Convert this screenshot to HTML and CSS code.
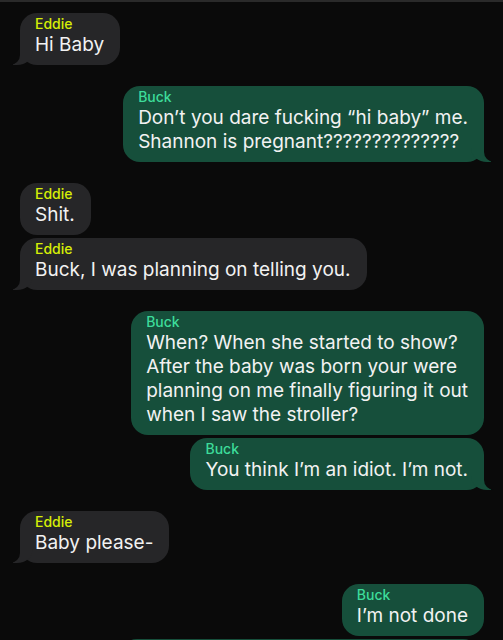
FILE: index.html
```html
<!DOCTYPE html>
<html lang="en">
<head>
  <meta charset="UTF-8">
  <title>Messages</title>
  <link rel="stylesheet" href="styles.css">
</head>
<body>

  <div class="chat">
    <div class="msg in tail">
      <div class="name">Eddie</div>
      <div class="text">Hi Baby</div>
    </div>

    <div class="msg out tail new">
      <div class="name">Buck</div>
      <div class="text">Don’t you dare fucking “hi baby” me.<br>Shannon is pregnant??????????????</div>
    </div>

    <div class="msg in new">
      <div class="name">Eddie</div>
      <div class="text">Shit.</div>
    </div>
    <div class="msg in tail">
      <div class="name">Eddie</div>
      <div class="text">Buck, I was planning on telling you.</div>
    </div>

    <div class="msg out new">
      <div class="name">Buck</div>
      <div class="text">When? When she started to show?<br>After the baby was born your were<br>planning on me finally figuring it out<br>when I saw the stroller?</div>
    </div>
    <div class="msg out tail">
      <div class="name">Buck</div>
      <div class="text">You think I’m an idiot. I’m not.</div>
    </div>

    <div class="msg in tail new">
      <div class="name">Eddie</div>
      <div class="text">Baby please-</div>
    </div>

    <div class="msg out new">
      <div class="name">Buck</div>
      <div class="text">I’m not done</div>
    </div>
    <!-- next bubble, scrolled out of view -->
    <div class="msg out peek"></div>
  </div>

</body>
</html>
```

FILE: styles.css
```css
body {
  margin: 0;
  background-color: #0a0a0a;
  font-family: 'Inter', 'Roboto', sans-serif;
  color: #f2f2f2;
  overflow: hidden;
}

.chat {
  display: flex;
  flex-direction: column;
  border-top: 2px solid #2a2a2a;
  padding: 8px 19px 20px 20px;
}

.msg {
  position: relative;
  padding: 2px 16px 8px 15px;
  border-radius: 17px;
  margin-top: 3px;
  white-space: nowrap;
}

.msg.new {
  margin-top: 21px;
}

.msg.in {
  align-self: flex-start;
  background-color: #262628;
}

.msg.out {
  align-self: flex-end;
  background-color: #164f3b;
}

.name {
  font-size: 14px;
  line-height: 18px;
  font-weight: 500;
}

.in .name {
  color: #d6ee06;
}

.out .name {
  color: #3ddc9a;
}

.text {
  font-size: 19px;
  line-height: 24px;
}

.peek {
  width: 360px;
  height: 40px;
  margin-right: 4px;
  padding: 0;
}

/* bubble tails */
.msg.tail::before,
.msg.tail::after {
  content: "";
  position: absolute;
  bottom: 0;
  height: 20px;
}

.msg.in.tail::before {
  left: -7px;
  width: 20px;
  background-color: #262628;
  border-bottom-right-radius: 16px 14px;
}

.msg.in.tail::after {
  left: -26px;
  width: 26px;
  background-color: #0a0a0a;
  border-bottom-right-radius: 10px;
}

.msg.out.tail::before {
  right: -7px;
  width: 20px;
  background-color: #164f3b;
  border-bottom-left-radius: 16px 14px;
}

.msg.out.tail::after {
  right: -26px;
  width: 26px;
  background-color: #0a0a0a;
  border-bottom-left-radius: 10px;
}
```
